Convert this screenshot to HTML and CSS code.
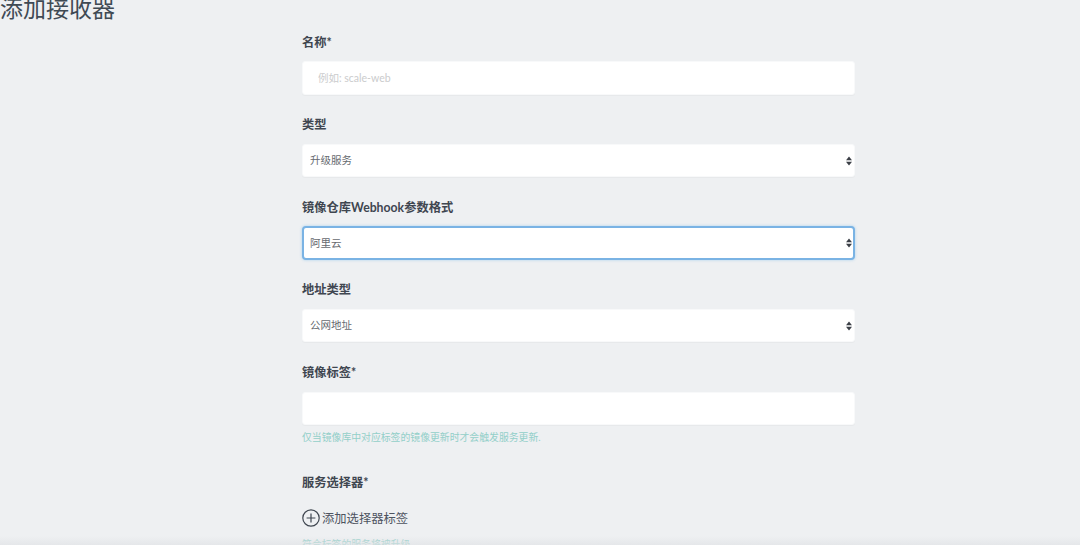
FILE: index.html
```html
<!DOCTYPE html>
<html lang="zh-CN">
<head>
<meta charset="utf-8">
<title>添加接收器</title>
<link rel="stylesheet" href="styles.css">
</head>
<body>
<h1 class="page-title">添加接收器</h1>
<form class="form">
  <div class="field">
    <label class="label">名称*</label>
    <input class="control control-name" type="text" placeholder="例如: scale-web">
  </div>
  <div class="field">
    <label class="label">类型</label>
    <div class="select-wrap">
      <select class="control"><option>升级服务</option></select>
      <svg class="select-arrows" viewBox="0 0 6 10" width="6" height="10"><path d="M3 0.5 6 4.2H0zM3 9.5 6 5.8H0z"/></svg>
    </div>
  </div>
  <div class="field">
    <label class="label">镜像仓库Webhook参数格式</label>
    <div class="select-wrap">
      <select class="control control-focus"><option>阿里云</option></select>
      <svg class="select-arrows" viewBox="0 0 6 10" width="6" height="10"><path d="M3 0.5 6 4.2H0zM3 9.5 6 5.8H0z"/></svg>
    </div>
  </div>
  <div class="field">
    <label class="label">地址类型</label>
    <div class="select-wrap">
      <select class="control"><option>公网地址</option></select>
      <svg class="select-arrows" viewBox="0 0 6 10" width="6" height="10"><path d="M3 0.5 6 4.2H0zM3 9.5 6 5.8H0z"/></svg>
    </div>
  </div>
  <div class="field">
    <label class="label">镜像标签*</label>
    <input class="control" type="text">
    <p class="hint">仅当镜像库中对应标签的镜像更新时才会触发服务更新.</p>
  </div>
  <div class="field field-selector">
    <label class="label">服务选择器*</label>
    <button class="add-btn" type="button">
      <svg class="add-icon" viewBox="0 0 18 18" width="18" height="18"><circle cx="9" cy="9" r="8.2"/><path d="M9 4.6v8.8M4.6 9h8.8"/></svg>
      <span>添加选择器标签</span>
    </button>
    <p class="hint hint-selector">符合标签的服务将被升级.</p>
  </div>
</form>
<div class="bottom-fade"></div>
</body>
</html>
```
FILE: styles.css
```css
* { box-sizing: border-box; }
html, body { height: 100%; }
body {
  margin: 0;
  height: 545px;
  overflow: hidden;
  position: relative;
  background: #eef0f2;
  color: #3f4650;
  font-family: Lato, "Noto Sans CJK SC", sans-serif;
}
.page-title {
  margin: 0;
  height: 17px;
  line-height: 17px;
  font-size: 23px;
  font-weight: 400;
  color: #3f4a54;
}
.form {
  display: flex;
  flex-direction: column;
  gap: 22.67px;
  width: 553px;
  margin: 17.5px 0 0 302px;
}
.field { display: flex; flex-direction: column; }
.label {
  height: 16px;
  line-height: 16px;
  margin-bottom: 10.5px;
  font-size: 12.25px;
  font-weight: 700;
  color: #3f4650;
}
.select-wrap { position: relative; }
.control {
  display: block;
  width: 100%;
  height: 33.5px;
  padding: 0 7px;
  border: 1px solid #f8f9fa;
  border-radius: 3px;
  background: #fff;
  color: #666a70;
  font-family: inherit;
  font-size: 10.5px;
  line-height: 31px;
  outline: none;
  appearance: none;
  box-shadow: 0 1px 1px rgba(0, 0, 0, 0.03);
}
.control-name { padding-left: 15px; }
.control::placeholder { color: #cbcccd; opacity: 1; }
.control-focus {
  border: 2px solid #7ab3e4;
  border-radius: 4px;
  padding: 0 6px;
  box-shadow: 0 0 3px rgba(82, 168, 236, 0.45);
}
.select-arrows {
  position: absolute;
  right: 3px;
  top: 12px;
  fill: #3b3f46;
}
.hint {
  margin: 6px 0 0;
  line-height: 13px;
  font-size: 9.85px;
  color: #93cfc9;
}
.field-selector { margin-top: 8.5px; }
.field-selector .label { margin-bottom: 17px; }
.add-btn {
  display: flex;
  align-items: center;
  gap: 2px;
  height: 20px;
  padding: 0;
  border: 0;
  background: none;
  color: #4d535f;
  font-family: inherit;
  font-size: 12.3px;
}
.add-icon { fill: none; stroke: #3f4650; stroke-width: 1.2; flex: none; }
.hint-selector { margin-top: 10px; }
.bottom-fade {
  position: absolute;
  left: 0;
  right: 0;
  bottom: 0;
  height: 9px;
  background: linear-gradient(rgba(225, 227, 230, 0), rgba(225, 227, 230, 0.7));
}
```
